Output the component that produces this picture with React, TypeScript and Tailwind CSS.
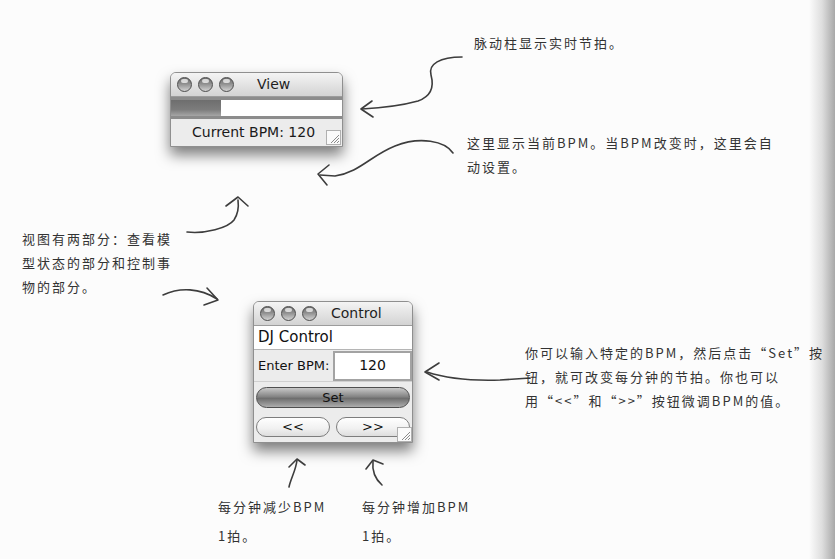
import React from "react";

const hand = {
  fontFamily: '"Noto Sans CJK SC", "Noto Sans", sans-serif',
};
const ui = {
  fontFamily: '"DejaVu Sans", "Liberation Sans", sans-serif',
};

// graphite aqua title-bar button
function Dot() {
  return (
    <span className="relative block w-[15px] h-[15px] rounded-full border border-[#4d4d4d] bg-[linear-gradient(to_bottom,#6f6f6f,#8f8f8f_45%,#d2d2d2)]">
      <span className="absolute left-[3px] top-[1px] w-[7px] h-[4px] rounded-full bg-white/70" />
    </span>
  );
}

function TitleBar({ title, titleGap }: { title: string; titleGap: string }) {
  return (
    <div className="h-[24px] flex items-center px-[6px] gap-[6px] bg-[linear-gradient(to_bottom,#f4f4f4,#d3d3d3)] border-b border-[#9c9c9c]">
      <Dot />
      <Dot />
      <Dot />
      <span className={`${titleGap} text-[14px] text-[#1f1f1f]`} style={ui}>
        {title}
      </span>
    </div>
  );
}

function Grip() {
  return (
    <svg width="15" height="15" viewBox="0 0 15 15" className="block">
      <rect x="0.5" y="0.5" width="14" height="14" fill="#fafafa" stroke="#b0b0b0" />
      <path d="M13 5 L5 13 M13 8 L8 13 M13 11 L11 13" stroke="#8a8a8a" strokeWidth="1" />
    </svg>
  );
}

function ViewWindow() {
  return (
    <div className="absolute left-[170px] top-[72px] w-[173px] rounded-t-[6px] border border-[#8f8f8f] bg-[#ececec] shadow-[0_8px_14px_rgba(0,0,0,0.5)] overflow-hidden">
      <TitleBar title="View" titleGap="ml-[17px]" />
      <div className="h-[22px] border-y-[3px] border-[#8c8c8c] bg-white flex">
        <div className="w-[50px] bg-[linear-gradient(to_bottom,#6e6e6e,#7c7c7c_60%,#a6a6a6)]" />
      </div>
      <div className="h-[27px] flex items-center pl-[21px] pr-[1px]">
        <span className="text-[14px] text-[#1a1a1a]" style={ui}>
          Current BPM: 120
        </span>
        <span className="ml-auto self-end mb-[1px]">
          <Grip />
        </span>
      </div>
    </div>
  );
}

function ControlWindow() {
  return (
    <div
      className="absolute left-[253px] top-[301px] w-[160px] rounded-t-[6px] border border-[#8f8f8f] bg-[#ececec] shadow-[0_8px_14px_rgba(0,0,0,0.5)] overflow-hidden"
      style={ui}
    >
      <TitleBar title="Control" titleGap="ml-[8px]" />
      <div className="h-[24px] flex items-center pl-[4px] bg-white border-b border-[#b5b5b5] text-[15px] text-[#111]">
        DJ Control
      </div>
      <div className="h-[32px] flex items-center pl-[4px] border-b border-[#d0d0d0]">
        <span className="text-[13px] text-[#111]">Enter BPM:</span>
        <div className="ml-auto w-[79px] h-[30px] border-2 border-[#a3a3a3] bg-white flex items-center justify-center text-[14px] text-[#111]">
          120
        </div>
      </div>
      <div className="mt-[5px] mx-[2px] h-[21px] rounded-full border border-[#4f4f4f] bg-[linear-gradient(to_bottom,#c8c8c8,#858585_45%,#6e6e6e_55%,#adadad)] flex items-center justify-center text-[13px] text-[#111]">
        Set
      </div>
      <div className="mt-[9px] mb-[5px] px-[2px] flex gap-[6px]">
        <div className="flex-1 h-[20px] rounded-full border border-[#7d7d7d] bg-[linear-gradient(to_bottom,#ffffff,#f0f0f0_60%,#dedede)] flex items-center justify-center text-[13px] text-[#111]">
          &lt;&lt;
        </div>
        <div className="flex-1 h-[20px] rounded-full border border-[#7d7d7d] bg-[linear-gradient(to_bottom,#ffffff,#f0f0f0_60%,#dedede)] flex items-center justify-center text-[13px] text-[#111]">
          &gt;&gt;
        </div>
      </div>
      <span className="absolute right-0 bottom-0">
        <Grip />
      </span>
    </div>
  );
}

function Note({ x, y, lines, lead = "leading-[24px]" }: { x: string; y: string; lines: string[]; lead?: string }) {
  return (
    <div
      className={`absolute ${x} ${y} ${lead} text-[13px] tracking-[2px] text-[#333]`}
      style={hand}
    >
      {lines.map((l, i) => (
        <div key={i} className="whitespace-nowrap">
          {l}
        </div>
      ))}
    </div>
  );
}

function Arrows() {
  const s = { stroke: "#3d3d3d", strokeWidth: 1.6, fill: "none", strokeLinecap: "round" as const, strokeLinejoin: "round" as const };
  return (
    <svg className="absolute left-0 top-0 pointer-events-none" width="809" height="559" viewBox="0 0 809 559">
      {/* pulse bar */}
      <path {...s} d="M462 57 C440 57, 428 64, 431 75 C434 86, 432 96, 418 101 C400 106, 380 108, 362 109" />
      <path {...s} d="M372 101 L361 109 L373 117" />
      {/* current bpm */}
      <path {...s} d="M453 153 C445 141, 420 136, 395 146 C370 156, 360 172, 335 176 L320 175" />
      <path {...s} d="M329 165 L318 174 L327 185" />
      {/* two parts -> view */}
      <path {...s} d="M187 232 C205 234, 228 228, 234 220 C238 214, 239 208, 238 200" />
      <path {...s} d="M226 206 L238 197 L248 206" />
      {/* two parts -> control */}
      <path {...s} d="M163 295 C180 287, 200 288, 217 299" />
      <path {...s} d="M207 288 L218 300 L204 305" />
      {/* set note */}
      <path {...s} d="M530 378 L500 380 C470 381, 445 378, 427 372" />
      <path {...s} d="M439 363 L425 372 L439 380" />
      {/* << */}
      <path {...s} d="M289 487 C291 478, 296 470, 297 460" />
      <path {...s} d="M289 467 L297 459 L305 465" />
      {/* >> */}
      <path {...s} d="M382 485 C374 478, 372 470, 373 461" />
      <path {...s} d="M366 469 L373 460 L383 464" />
    </svg>
  );
}

export default function App() {
  return (
    <div className="w-[835px] h-[559px] flex overflow-hidden bg-[#fcfcfc]">
      <div className="relative flex-1">
        <ViewWindow />
        <ControlWindow />
        <Arrows />
        <Note x="left-[474px]" y="top-[31px]" lines={["脉动柱显示实时节拍。"]} />
        <Note
          x="left-[467px]"
          y="top-[131px]"
          lines={["这里显示当前BPM。当BPM改变时，这里会自", "动设置。"]}
        />
        <Note
          x="left-[22px]"
          y="top-[227px]"
          lines={["视图有两部分：查看模", "型状态的部分和控制事", "物的部分。"]}
        />
        <Note
          x="left-[525px]"
          y="top-[341px]"
          lines={[
            "你可以输入特定的BPM，然后点击“Set”按",
            "钮，就可改变每分钟的节拍。你也可以",
            "用“<<”和“>>”按钮微调BPM的值。",
          ]}
        />
        <Note x="left-[218px]" y="top-[492px]" lead="leading-[29px]" lines={["每分钟减少BPM", "1拍。"]} />
        <Note x="left-[362px]" y="top-[492px]" lead="leading-[29px]" lines={["每分钟增加BPM", "1拍。"]} />
      </div>
      <div className="w-[26px] bg-gradient-to-r from-[#fcfcfc] via-[#dedede] to-[#a8a8a8]" />
    </div>
  );
}
